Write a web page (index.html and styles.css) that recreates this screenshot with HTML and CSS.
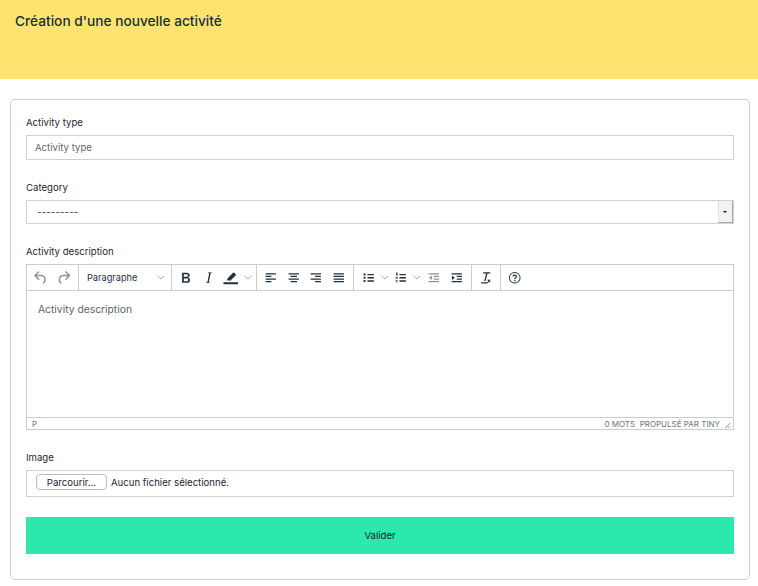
FILE: index.html
```html
<!DOCTYPE html>
<html lang="fr">
<head>
    <meta charset="UTF-8">
    <meta name="viewport" content="width=device-width, initial-scale=1.0">
    <title>Création d'une nouvelle activité</title>
    <link rel="stylesheet" href="styles.css">
</head>
<body>
    <svg class="icon-defs" aria-hidden="true">
        <symbol id="i-undo" viewBox="0 0 24 24"><path d="M6.4 8H12c3.7 0 6.2 2 6.8 5.1.6 2.7-.4 5.6-2.3 6.8a1 1 0 0 1-1-1.8c1.1-.6 1.8-2.7 1.4-4.6-.5-2.1-2.1-3.5-4.9-3.5H6.4l3.3 3.3a1 1 0 1 1-1.4 1.4l-5-5a1 1 0 0 1 0-1.4l5-5a1 1 0 0 1 1.4 1.4L6.4 8z"/></symbol>
        <symbol id="i-redo" viewBox="0 0 24 24"><path d="M17.6 10H12c-2.8 0-4.4 1.4-4.9 3.5-.4 2 .3 4 1.4 4.6a1 1 0 1 1-1 1.8c-2-1.2-2.9-4.1-2.3-6.8.6-3 3-5.1 6.8-5.1h5.6l-3.3-3.3a1 1 0 1 1 1.4-1.4l5 5a1 1 0 0 1 0 1.4l-5 5a1 1 0 0 1-1.4-1.4l3.3-3.3z"/></symbol>
        <symbol id="i-bold" viewBox="0 0 24 24"><path d="M7.8 19c-.3 0-.5 0-.6-.2l-.2-.5V5.7c0-.2 0-.4.2-.5l.6-.2h5c1.5 0 2.7.3 3.5 1 .7.6 1.1 1.4 1.1 2.5a3 3 0 0 1-.6 1.9c-.4.6-1 1-1.6 1.2.4.1.9.3 1.3.6s.8.7 1 1.2c.3.4.4 1 .4 1.6 0 1.3-.4 2.3-1.3 3-.8.7-2.1 1-3.8 1H7.8zm5-8.3c.6 0 1.2-.1 1.6-.5.4-.3.6-.7.6-1.3 0-1.1-.8-1.7-2.3-1.7H9.3v3.5h3.4zm.5 6c.7 0 1.3-.1 1.7-.4.4-.4.6-.9.6-1.5s-.2-1-.7-1.4c-.4-.3-1-.4-2-.4H9.4v3.8h4z"/></symbol>
        <symbol id="i-italic" viewBox="0 0 24 24"><path d="M16.7 4.7l-.1.9h-.3c-.6 0-1 0-1.4.3-.3.3-.4.6-.5 1.1l-2.1 9.8v.6c0 .5.4.8 1.4.8h.2l-.2.8H8l.2-.8h.2c1.1 0 1.8-.5 2-1.5l2-9.8.1-.5c0-.6-.4-.8-1.4-.8h-.3l.2-.9h5.8z"/></symbol>
        <symbol id="i-marker" viewBox="0 0 24 24"><path d="M2 18h20v3H2z"/><path d="M6.500 16.500l1-3.600 7.600-7.600a1.200 1.200 0 0 1 1.700 0l1.900 1.900a1.200 1.200 0 0 1 0 1.700L11 16.500 8.500 15z"/></symbol>
        <symbol id="i-left" viewBox="0 0 24 24"><path d="M4 5h16v2H4zM4 9h9v2H4zM4 13h16v2H4zM4 17h9v2H4z"/></symbol>
        <symbol id="i-center" viewBox="0 0 24 24"><path d="M4 5h16v2H4zM7 9h10v2H7zM4 13h16v2H4zM7 17h10v2H7z"/></symbol>
        <symbol id="i-right" viewBox="0 0 24 24"><path d="M4 5h16v2H4zM11 9h9v2h-9zM4 13h16v2H4zM11 17h9v2h-9z"/></symbol>
        <symbol id="i-justify" viewBox="0 0 24 24"><path d="M4 5h16v2H4zM4 9h16v2H4zM4 13h16v2H4zM4 17h16v2H4z"/></symbol>
        <symbol id="i-bullets" viewBox="0 0 24 24"><path d="M10 6h10v2H10zM10 11h10v2H10zM10 16h10v2H10zM4 5.500h3v3H4zM4 10.500h3v3H4zM4 15.500h3v3H4z"/></symbol>
        <symbol id="i-numbers" viewBox="0 0 24 24"><path d="M10 6h10v2H10zM10 11h10v2H10zM10 16h10v2H10zM5 4h2v5H5zM4 11h3v1H4zM6 12h1v1H6zM4 13h3v1H4zM4 16h3v1H4zM4 18h3v1H4zM6 16.500h1v2H6z"/></symbol>
        <symbol id="i-outdent" viewBox="0 0 24 24"><path d="M4 5h16v2H4zM12 9h8v2h-8zM12 13h8v2h-8zM4 17h16v2H4zM9 8.500v7L4.500 12z"/></symbol>
        <symbol id="i-indent" viewBox="0 0 24 24"><path d="M4 5h16v2H4zM12 9h8v2h-8zM12 13h8v2h-8zM4 17h16v2H4zM4.500 8.500v7L9 12z"/></symbol>
        <symbol id="i-clear" viewBox="0 0 24 24"><path d="M5 19h10v2H5zM8 3.500h11v2h-4.300L11.700 17H9.600l3-11.500H8zM15.500 14.500l1.500 1.500 1.500-1.500 1 1-1.500 1.500 1.500 1.500-1 1-1.500-1.500-1.500 1.500-1-1 1.500-1.500-1.500-1.500z"/></symbol>
        <symbol id="i-help" viewBox="0 0 24 24"><path d="M12 3a9 9 0 1 1 0 18 9 9 0 0 1 0-18zm0 1.500a7.500 7.500 0 1 0 0 15 7.500 7.500 0 0 0 0-15zM11.100 15.500h1.800v1.800h-1.800zM12 7c2 0 3.500 1.200 3.500 3 0 1.300-.7 2-1.600 2.600-.7.500-.9.800-.9 1.900h-1.800c0-1.700.6-2.400 1.700-3.200.6-.4.800-.7.800-1.300 0-.7-.6-1.200-1.700-1.200-1 0-1.500.5-1.600 1.400H8.600C8.700 8.200 10 7 12 7z"/></symbol>
        <symbol id="i-chevron" viewBox="0 0 10 6"><path d="M1 1l4 4 4-4" fill="none" stroke="currentColor" stroke-width="1"/></symbol>
    </svg>

    <header class="page-header">
        <h1>Création d'une nouvelle activité</h1>
    </header>

    <form class="card">
        <div class="field">
            <label for="activity-type">Activity type</label>
            <input type="text" id="activity-type" class="text-input" placeholder="Activity type">
        </div>

        <div class="field">
            <label for="category">Category</label>
            <div class="select-box">
                <select id="category"><option>---------</option></select>
                <span class="select-arrow"></span>
            </div>
        </div>

        <div class="field">
            <label>Activity description</label>
            <div class="editor">
                <div class="toolbar">
                    <div class="tool-group group-history">
                        <span class="tool muted"><svg><use href="#i-undo"/></svg></span>
                        <span class="tool muted"><svg><use href="#i-redo"/></svg></span>
                    </div>
                    <div class="tool-group group-format">
                        <span class="format-name">Paragraphe</span>
                        <svg class="chevron"><use href="#i-chevron"/></svg>
                    </div>
                    <div class="tool-group group-style">
                        <span class="tool"><svg><use href="#i-bold"/></svg></span>
                        <span class="tool"><svg><use href="#i-italic"/></svg></span>
                        <span class="tool"><svg><use href="#i-marker"/></svg></span>
                        <svg class="chevron"><use href="#i-chevron"/></svg>
                    </div>
                    <div class="tool-group group-align">
                        <span class="tool small"><svg><use href="#i-left"/></svg></span>
                        <span class="tool small"><svg><use href="#i-center"/></svg></span>
                        <span class="tool small"><svg><use href="#i-right"/></svg></span>
                        <span class="tool small"><svg><use href="#i-justify"/></svg></span>
                    </div>
                    <div class="tool-group group-lists">
                        <span class="tool small"><svg><use href="#i-bullets"/></svg></span>
                        <svg class="chevron"><use href="#i-chevron"/></svg>
                        <span class="tool small"><svg><use href="#i-numbers"/></svg></span>
                        <svg class="chevron"><use href="#i-chevron"/></svg>
                        <span class="tool small muted"><svg><use href="#i-outdent"/></svg></span>
                        <span class="tool small"><svg><use href="#i-indent"/></svg></span>
                    </div>
                    <div class="tool-group">
                        <span class="tool small"><svg><use href="#i-clear"/></svg></span>
                    </div>
                    <div class="tool-group last-group">
                        <span class="tool small"><svg><use href="#i-help"/></svg></span>
                    </div>
                </div>
                <div class="editor-body">Activity description</div>
                <div class="statusbar">
                    <span>P</span>
                    <span class="status-right">0 MOTS&nbsp;&nbsp;PROPULSÉ PAR TINY</span>
                    <svg class="resize-grip" viewBox="0 0 8 8"><path d="M7 1L1 7M7 4L4 7M7 6.500L6.500 7" stroke="#888" fill="none"/></svg>
                </div>
            </div>
        </div>

        <div class="field">
            <label>Image</label>
            <div class="file-box">
                <button type="button" class="file-button">Parcourir...</button>
                <span>Aucun fichier sélectionné.</span>
            </div>
        </div>

        <button type="submit" class="submit-button">Valider</button>
    </form>
</body>
</html>
```

FILE: styles.css
```css
* {
    box-sizing: border-box;
}

html, body {
    height: 100%;
    overflow: hidden;
}

body {
    margin: 0;
    font-family: Inter, "Liberation Sans", sans-serif;
    font-size: 9.6px;
    color: #1f2430;
    background-color: #fff;
}

.icon-defs {
    display: none;
}

.page-header {
    height: 79px;
    padding: 13px 15px;
    background-color: #ffe36f;
}

h1 {
    margin: 0;
    font-size: 13.7px;
    line-height: 17px;
    font-weight: 500;
    color: #17303d;
}

.card {
    margin: 20px 8px 0 10px;
    height: 481px;
    padding: 15px;
    border: 1px solid #ccc;
    border-radius: 5px;
}

.field {
    margin-bottom: 20px;
}

.field label {
    display: block;
    height: 20px;
    line-height: 16px;
}

.text-input {
    display: block;
    width: 100%;
    height: 25px;
    padding: 0 8px;
    border: 1px solid #cfd1d8;
    font: inherit;
    color: #555;
}

.text-input::placeholder {
    color: #666;
    opacity: 1;
}

.select-box {
    display: flex;
    height: 24px;
    border: 1px solid #cfd1d8;
}

.select-box select {
    flex: 1;
    appearance: none;
    border: none;
    padding: 0 10px;
    background: #fff;
    font: inherit;
    font-size: 10px;
    color: #444;
}

.select-arrow {
    position: relative;
    width: 15px;
    background-color: #f2f2f2;
    border-left: 1px solid #e2e2e2;
    border-right: 1px solid #aaa;
    border-bottom: 1px solid #aaa;
}

.select-arrow::after {
    content: "";
    position: absolute;
    left: 4px;
    top: 10px;
    border: 2.5px solid transparent;
    border-top-color: #111;
    border-bottom: none;
}

.editor {
    height: 166px;
    display: flex;
    flex-direction: column;
    border: 1px solid #ccc;
}

.toolbar {
    display: flex;
    height: 26px;
    border-bottom: 1px solid #ccc;
}

.tool-group {
    display: flex;
    align-items: center;
    padding: 0 2.5px;
    border-right: 1px solid #ccc;
    color: #222f3e;
    fill: #222f3e;
}

.last-group {
    border-right: none;
}

.tool {
    display: flex;
    align-items: center;
    justify-content: center;
    width: 22.7px;
    height: 22px;
}

.tool svg {
    width: 17.5px;
    height: 17.5px;
}

.tool.small svg {
    width: 15.5px;
    height: 15.5px;
}

.tool.muted {
    fill: #8a929b;
}

.chevron {
    width: 8px;
    height: 5px;
    color: #8a929b;
}

.group-history {
    width: 52px;
}

.group-format {
    width: 93px;
    padding: 0 6px 0 8px;
    justify-content: space-between;
}

.format-name {
    font-size: 9.2px;
}

.group-style {
    width: 85px;
}

.group-style .chevron {
    margin-left: 1px;
}

.group-align {
    width: 97px;
    padding: 0 2.5px;
}

.group-lists {
    width: 118px;
    padding: 0 3px;
}

.group-lists .chevron {
    margin: 0 1px;
}

.editor-body {
    flex: 1;
    padding: 12px 11px;
    font-size: 10.3px;
    color: #5c6470;
}

.statusbar {
    display: flex;
    align-items: center;
    height: 12px;
    padding: 0 2px 0 5px;
    border-top: 1px solid #ccc;
    font-size: 8px;
    color: #6b7480;
}

.status-right {
    margin-left: auto;
    margin-right: 4px;
}

.resize-grip {
    width: 7px;
    height: 7px;
    margin-top: 3px;
}

.file-box {
    display: flex;
    align-items: center;
    gap: 4px;
    height: 27px;
    padding: 0 9px 3px;
    border: 1px solid #cfd1d8;
}

.file-button {
    width: 71px;
    height: 16px;
    padding: 0;
    border: 1px solid #bbb;
    border-radius: 4px;
    background-color: #fff;
    font: inherit;
    color: #1f2430;
}

.submit-button {
    display: block;
    width: 100%;
    height: 37px;
    padding: 0;
    border: none;
    background-color: #2ce8ac;
    font: inherit;
    color: #1f2430;
}
```
